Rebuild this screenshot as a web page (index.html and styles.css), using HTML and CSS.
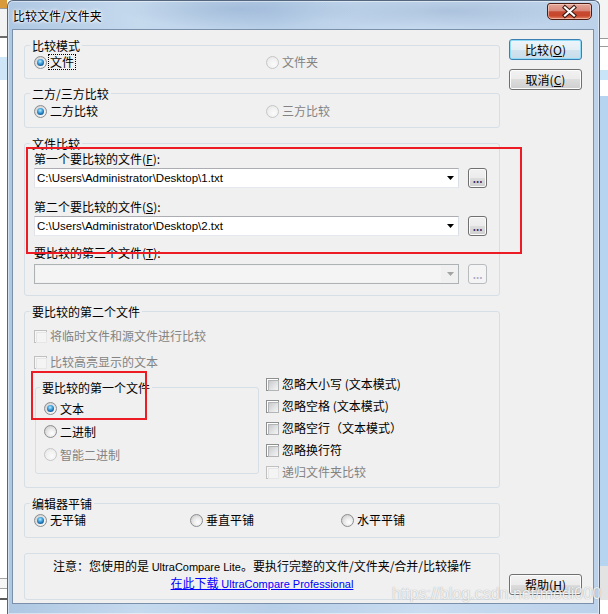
FILE: index.html
```html
<!DOCTYPE html>
<html lang="zh-CN">
<head>
<meta charset="utf-8">
<title>比较文件/文件夹</title>
<link rel="stylesheet" href="styles.css">
</head>
<body>
<div class="screen">
  <div class="app-left"></div>
  <div class="window">
    <div class="titlebar">
      <span class="title">比较文件/文件夹</span>
      <span class="close">
        <svg width="43" height="15" viewBox="0 0 43 15">
          <path d="M17 3.5 L26 11.5 M26 3.5 L17 11.5" stroke="#3b1710" stroke-width="4.2" stroke-linecap="square" fill="none"/>
          <path d="M17 3.5 L26 11.5 M26 3.5 L17 11.5" stroke="#ffffff" stroke-width="2.2" stroke-linecap="square" fill="none"/>
        </svg>
      </span>
    </div>
    <div class="client">
      <div class="main">
        <fieldset class="group g1">
          <legend>比较模式</legend>
          <div class="opts two">
            <label class="opt"><span class="radio on"></span><span class="focus">文件</span></label>
            <label class="opt off"><span class="radio"></span><span>文件夹</span></label>
          </div>
        </fieldset>

        <fieldset class="group g2">
          <legend>二方/三方比较</legend>
          <div class="opts two">
            <label class="opt"><span class="radio on"></span><span>二方比较</span></label>
            <label class="opt off"><span class="radio"></span><span>三方比较</span></label>
          </div>
        </fieldset>

        <fieldset class="group g3">
          <legend>文件比较</legend>
          <div class="file-item">
            <div class="file-label">第一个要比较的文件(<u>F</u>):</div>
            <div class="file-row">
              <div class="combo"><span class="combo-text">C:\Users\Administrator\Desktop\1.txt</span><svg class="arrow" width="7" height="4" viewBox="0 0 7 4"><path d="M0 0 H7 L3.5 4 Z" fill="#000"/></svg></div>
              <span class="browse">...</span>
            </div>
          </div>
          <div class="file-item">
            <div class="file-label">第二个要比较的文件(<u>S</u>):</div>
            <div class="file-row">
              <div class="combo"><span class="combo-text">C:\Users\Administrator\Desktop\2.txt</span><svg class="arrow" width="7" height="4" viewBox="0 0 7 4"><path d="M0 0 H7 L3.5 4 Z" fill="#000"/></svg></div>
              <span class="browse">...</span>
            </div>
          </div>
          <div class="file-item third">
            <div class="file-label">要比较的第三个文件(<u>T</u>):</div>
            <div class="file-row">
              <div class="combo disabled"><span class="combo-field"></span><svg class="arrow" width="7" height="4" viewBox="0 0 7 4"><path d="M0 0 H7 L3.5 4 Z" fill="#a3a3a3"/></svg></div>
              <span class="browse disabled">...</span>
            </div>
          </div>
        </fieldset>

        <fieldset class="group g4">
          <legend>要比较的第二个文件</legend>
          <label class="opt off row20"><span class="check dis"></span><span>将临时文件和源文件进行比较</span></label>
          <label class="opt off row20 second"><span class="check dis"></span><span>比较高亮显示的文本</span></label>
          <div class="split">
            <fieldset class="group sub">
              <legend>要比较的第一个文件</legend>
              <label class="opt row23"><span class="radio on"></span><span>文本</span></label>
              <label class="opt row23"><span class="radio"></span><span>二进制</span></label>
              <label class="opt row23 off"><span class="radio dis"></span><span>智能二进制</span></label>
            </fieldset>
            <div class="checks">
              <label class="opt row22"><span class="check"></span><span>忽略大小写 (文本模式)</span></label>
              <label class="opt row22"><span class="check"></span><span>忽略空格 (文本模式)</span></label>
              <label class="opt row22"><span class="check"></span><span>忽略空行（文本模式）</span></label>
              <label class="opt row22"><span class="check"></span><span>忽略换行符</span></label>
              <label class="opt row22 off"><span class="check dis"></span><span>递归文件夹比较</span></label>
            </div>
          </div>
        </fieldset>

        <fieldset class="group g5">
          <legend>编辑器平铺</legend>
          <div class="opts three">
            <label class="opt"><span class="radio on"></span><span>无平铺</span></label>
            <label class="opt"><span class="radio"></span><span>垂直平铺</span></label>
            <label class="opt"><span class="radio"></span><span>水平平铺</span></label>
          </div>
        </fieldset>

        <div class="notice">
          <div>注意：您使用的是 <span class="latin">UltraCompare Lite</span>。要执行完整的文件/文件夹/合并/比较操作</div>
          <div><a href="#">在此下载 <span class="latin">UltraCompare Professional</span></a></div>
        </div>
      </div>

      <div class="side">
        <button class="btn default">比较(<u>O</u>)</button>
        <button class="btn cancel">取消(<u>C</u>)</button>
        <button class="btn help">帮助(<u>H</u>)</button>
      </div>
    </div>
  </div>
  <div class="app-right"></div>

  <div class="mark mark1"></div>
  <div class="mark mark2"></div>
  <div class="watermark">https://blog.csdn.net/modi000</div>
</div>
</body>
</html>
```
FILE: styles.css
```css
* { box-sizing: border-box; }
html, body { margin: 0; padding: 0; }
body {
  width: 608px;
  height: 614px;
  overflow: hidden;
  background: #fff;
  font-family: "Noto Sans CJK SC", "Noto Sans", sans-serif;
  font-size: 12px;
  color: #000;
}
.screen {
  position: relative;
  display: flex;
  width: 608px;
  height: 614px;
}

/* background application strips */
.app-left {
  width: 7px;
  flex: none;
  background: linear-gradient(to bottom,
    #d99a3c 0 8px, #9a9a9a 8px 9px, #f3f3f3 9px 36px, #6b6b6b 36px 38px,
    #ffffff 38px 57px, #cfe6f8 57px 80px, #ffffff 80px 578px,
    #a5a5a5 578px 579px, #f6f6f6 579px 588px, #a5a5a5 588px 589px,
    #ffffff 589px 598px, #5a5a5a 598px 600px, #ffffff 600px);
}
.app-right {
  width: 8px;
  flex: none;
  background: linear-gradient(to bottom,
    #f4f4f4 0 38px, #9a9a9a 38px 39px, #ffffff 39px 46px, #9a9a9a 46px 47px,
    #ffffff 47px 70px, #c9e3f7 70px 80px, #ffffff 80px 96px,
    #b6d3ef 96px 566px, #e3e3e3 566px 600px, #ffffff 600px);
}

/* window frame */
.window {
  width: 593px;
  height: 614px;
  flex: none;
  display: flex;
  flex-direction: column;
  padding: 0 5px 0 4px;
  border: 1px solid #54677f;
  border-bottom: 0;
  border-radius: 6px 6px 0 0;
  background:
    radial-gradient(ellipse 120px 20px at 230px 8px, rgba(120,150,190,.35), rgba(120,150,190,0)),
    radial-gradient(ellipse 140px 20px at 440px 10px, rgba(110,140,180,.3), rgba(110,140,180,0)),
    linear-gradient(90deg, #aec7e2 0%, #c6daee 22%, #b8cfe8 45%, #c9dcf0 70%, #bcd2ea 100%);
  box-shadow: inset 0 0 0 1px rgba(255,255,255,.45);
}
.titlebar {
  height: 28px;
  flex: none;
  display: flex;
  align-items: flex-start;
}
.title {
  padding: 8px 0 0 1px;
  line-height: 14px;
  font-size: 12px;
  text-shadow: 0 0 5px #fff, 0 0 3px #fff, 0 0 2px #fff;
}
.close {
  margin: 2px 2px 0 auto;
  width: 45px;
  height: 17px;
  border: 1px solid #4b1c12;
  border-radius: 3px 3px 5px 5px;
  background: linear-gradient(#e3a799 0%, #d9887a 45%, #c54a31 52%, #c8462b 78%, #e0876a 100%);
  box-shadow: inset 0 0 0 1px rgba(255,220,210,.55);
  display: block;
}
.close svg { display: block; }

/* client area */
.client {
  height: 575px;
  flex: none;
  display: flex;
  border: 1px solid #7b90ab;
  background: #f0f0f0;
  padding: 8px 11px 8px 11px;
}
.main {
  width: 476px;
  flex: none;
  display: flex;
  flex-direction: column;
}
.side {
  width: 73px;
  flex: none;
  margin-left: 9px;
  display: flex;
  flex-direction: column;
}

/* group boxes */
.group {
  margin: 0;
  min-inline-size: 0;
  border: 1px solid #d5dfe5;
  border-radius: 3px;
  padding: 0 10px 7px 9px;
}
.group legend {
  margin-left: -4px;
  padding: 0 2px;
  line-height: 15px;
  font-size: 12px;
}
.g2 { margin-top: 7px; padding-top: 1px; }
.g3 { margin-top: 8px; padding: 1px 10px 11px 9px; }
.g4 { margin-top: 8px; padding: 7px 10px 4px 9px; }
.g5 { margin-top: 8px; padding: 0 10px 8px 9px; }

.opts {
  display: grid;
  height: 18px;
  align-items: center;
}
.two { grid-template-columns: 232px auto; }
.three { grid-template-columns: 156px 151px auto; }

.opt {
  display: flex;
  align-items: center;
  gap: 3px;
  line-height: 14px;
  white-space: nowrap;
}
.off { color: #838383; }
.focus {
  outline: 1px dotted #000;
  padding: 0 1px;
  margin-left: -1px;
}

/* radio */
.radio {
  width: 13px;
  height: 13px;
  flex: none;
  border-radius: 50%;
  border: 1px solid #8b8d8f;
  background: radial-gradient(circle at 62% 66%, #ffffff 0%, #ececec 40%, #c2c2c2 100%);
  display: grid;
  place-items: center;
}
.radio.on::after {
  content: "";
  width: 7px;
  height: 7px;
  border-radius: 50%;
  background: radial-gradient(circle at 45% 35%, #b9ecff 0%, #4aa8e0 35%, #1c6aa8 65%, #1b4a78 100%);
}
.off .radio {
  border-color: #c6c6c6;
  background: radial-gradient(circle at 62% 66%, #fbfbfb 0%, #f1f1f1 50%, #e2e2e2 100%);
}

/* checkbox */
.check {
  width: 13px;
  height: 13px;
  flex: none;
  border: 1px solid #8e8f8f;
  background: #fff;
  padding: 1px;
}
.check::after {
  content: "";
  display: block;
  width: 9px;
  height: 9px;
  border: 1px solid #b2b4b6;
  background: linear-gradient(135deg, #c8c9ca 0%, #e2e3e4 55%, #f5f5f5 100%);
}
.check.dis {
  border-color: #c0c0c0;
  background: #f7f7f7;
}
.check.dis::after {
  border-color: #e6e6e6;
  background: #f4f4f4;
}

/* file selectors */
.file-label {
  line-height: 14px;
  margin-bottom: 2px;
  white-space: nowrap;
}
.file-item + .file-item { margin-top: 12px; }
.file-item.third { margin-top: 10px; }
.third .file-label { margin-bottom: 4px; }
.file-row {
  display: flex;
  align-items: center;
  gap: 9px;
}
.combo {
  width: 425px;
  height: 20px;
  flex: none;
  display: flex;
  align-items: center;
  justify-content: space-between;
  background: #fff;
  border: 1px solid;
  border-color: #abadb3 #dbdfe6 #e3e9ef #e2e3ea;
  padding: 0 4px 0 2px;
}
.combo-text {
  font-family: "Liberation Sans", Arial, sans-serif;
  font-size: 11.5px;
  line-height: 14px;
  white-space: nowrap;
}
.arrow { display: block; flex: none; }
.combo.disabled {
  background: #f0f0f0;
  border-color: #adb2b5;
  padding-left: 1px;
}
.combo-field {
  width: 405px;
  height: 16px;
  background: #f4f4f4;
}
.browse {
  width: 19px;
  height: 20px;
  flex: none;
  border: 1px solid #707070;
  border-radius: 3px;
  background: linear-gradient(#f2f2f2 0%, #ebebeb 50%, #dddddd 50%, #cfcfcf 100%);
  box-shadow: inset 0 0 0 1px #fbfbfb;
  display: flex;
  justify-content: center;
  align-items: flex-end;
  padding-bottom: 4px;
  font-size: 10px;
  line-height: 8px;
  color: #3c2a66;
  font-weight: bold;
}
.browse.disabled {
  border-color: #b8bcbf;
  background: #f4f4f4;
  box-shadow: none;
  color: #b0a8c8;
}

/* second file group */
.row20 { height: 20px; }
.row20.second { margin-top: 6px; }
.split {
  display: flex;
  margin-top: 1px;
}
.sub {
  margin: 7px 0 0 1px;
  width: 224px;
  flex: none;
  align-self: flex-start;
  padding: 2px 8px 7px 8px;
}
.row23 { height: 23px; }
.checks {
  margin-left: 7px;
  display: flex;
  flex-direction: column;
}
.row22 { height: 22px; }

/* notice */
.notice {
  margin-top: 15px;
  border: 1px solid #d5dfe5;
  border-radius: 3px;
  padding: 4px 0 7px;
  text-align: center;
  line-height: 15px;
  white-space: nowrap;
}
.latin {
  font-family: "Liberation Sans", Arial, sans-serif;
  font-size: 11px;
}
.notice a {
  color: #0000ff;
  text-decoration: underline;
}

/* buttons */
.btn {
  height: 21px;
  padding: 0;
  border: 1px solid #707070;
  border-radius: 3px;
  background: linear-gradient(#f2f2f2 0%, #ebebeb 50%, #dddddd 50%, #cfcfcf 100%);
  box-shadow: inset 0 0 0 1px #fcfcfc;
  font-family: "Noto Sans CJK SC", "Noto Sans", sans-serif;
  font-size: 12px;
  line-height: 19px;
  color: #000;
  text-align: center;
}
.btn.default {
  margin-top: 1px;
  border-color: #3c7fb1;
  box-shadow: inset 0 0 0 1px #8fdcf8;
  background: linear-gradient(#edf5fa 0%, #e3eef5 50%, #d2e4ef 50%, #c8dcea 100%);
}
.btn.cancel { margin-top: 9px; }
.btn.help { margin-top: auto; }

/* annotations */
.mark {
  position: absolute;
  border: 2px solid #ed1c24;
}
.mark1 { left: 26px; top: 147px; width: 496px; height: 107px; }
.mark2 { left: 31px; top: 371px; width: 116px; height: 49px; }

.watermark {
  position: absolute;
  left: 392px;
  top: 584px;
  font-family: "Liberation Sans", Arial, sans-serif;
  font-size: 16px;
  line-height: 20px;
  color: rgba(255,255,255,.85);
  text-shadow: 0 0 1px rgba(80,80,80,.55);
  white-space: nowrap;
}
```
